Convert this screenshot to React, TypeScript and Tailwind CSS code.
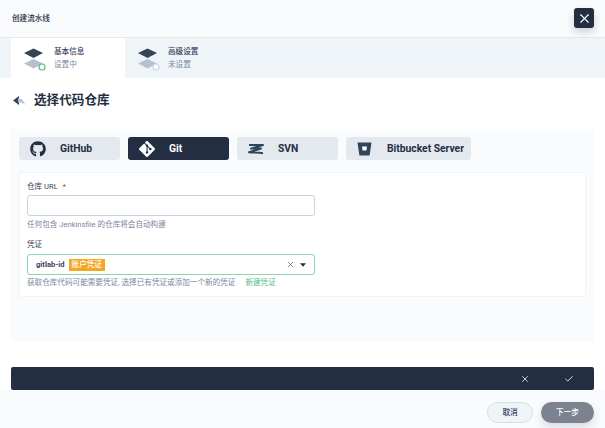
import { Check, X } from 'lucide-react';
import { FaGithub } from 'react-icons/fa';
import { SiGit } from 'react-icons/si';

const FONT = "font-['Roboto','Noto_Sans_CJK_SC',sans-serif]";

function StackIcon({ done }: { done: boolean }) {
  return (
    <svg width="24" height="24" viewBox="0 0 24 24" className="shrink-0 mt-[2px]">
      <path d="M1 16.5 L10.5 12 L20 16.5 L10.5 21.5 Z" fill="#b6c1cd" />
      <path d="M1 6 L10.5 1.5 L20 6 L10.5 11 Z" fill="#324558" />
      <circle
        cx="19"
        cy="20"
        r="3"
        fill="#fff"
        stroke={done ? '#55bc8a' : '#d1d7e0'}
        strokeWidth="1.2"
      />
    </svg>
  );
}

function SvnIcon() {
  return (
    <svg width="16" height="12" viewBox="0 0 16 12">
      <path
        d="M1 2 H15 L3 5.6 H13 L1 9.2 C6 9.6 11 9.6 15 10.2"
        fill="none"
        stroke="#324558"
        strokeWidth="2"
        strokeLinejoin="round"
      />
    </svg>
  );
}

function BitbucketIcon() {
  return (
    <svg width="15" height="14" viewBox="0 0 15 14">
      <path d="M0.5 0.5 H14.5 L12.6 13.5 H2.4 Z" fill="#324558" />
      <path d="M5 4.5 H10 L9.4 8.6 H5.6 Z" fill="#fff" />
    </svg>
  );
}

function RepoTab({ label, active, icon, width }: { label: string; active?: boolean; icon: React.ReactNode; width: string }) {
  return (
    <div
      className={`${width} h-[23px] rounded-[3px] flex items-center text-[10.3px] font-bold whitespace-nowrap ${
        active ? 'bg-[#242e42] text-white' : 'bg-[#e3e9ef] text-[#242e42]'
      }`}
    >
      <span className="w-[37px] mr-[4px] flex justify-center items-center shrink-0">{icon}</span>
      <span>{label}</span>
    </div>
  );
}

export default function App() {
  return (
    <div className={`${FONT} w-[605px] h-[428px] bg-white flex flex-col overflow-hidden text-[#242e42]`}>
      {/* header */}
      <div className="h-[38px] shrink-0 bg-[#f9fbfd] border-b border-[#e3e9ef] flex items-center justify-between pl-[12px] pr-[11px]">
        <span className="text-[7.6px] font-medium text-[#242e42]">创建流水线</span>
        <div className="w-5 h-5 mt-[-1px] rounded-[3px] bg-[#242e42] flex items-center justify-center shadow-[0_4px_8px_rgba(36,46,66,0.2)]">
          <X size={15} color="#fff" strokeWidth={1.8} />
        </div>
      </div>

      {/* steps */}
      <div className="h-[40px] shrink-0 bg-[#eff4f9] pl-[11px] flex">
        <div className="w-[114px] bg-white flex items-center pl-[12px] gap-[7px]">
          <StackIcon done />
          <div className="flex flex-col pt-[1px]">
            <span className="text-[7.6px] leading-[12.5px] font-medium text-[#36435c]">基本信息</span>
            <span className="text-[7.6px] leading-[12.5px] text-[#79879c]">设置中</span>
          </div>
        </div>
        <div className="w-[114px] flex items-center pl-[12px] gap-[7px]">
          <StackIcon done={false} />
          <div className="flex flex-col pt-[1px]">
            <span className="text-[7.6px] leading-[12.5px] font-medium text-[#36435c]">高级设置</span>
            <span className="text-[7.6px] leading-[12.5px] text-[#79879c]">未设置</span>
          </div>
        </div>
      </div>

      {/* title */}
      <div className="h-[51px] shrink-0 pl-[13px] pb-[6px] flex items-center gap-[9px]">
        <svg width="12" height="10" viewBox="0 0 12 10">
          <path d="M0 4.5 L6 0 L6 9 Z" fill="#324558" />
          <path d="M5 2.5 C8.5 2.5 11 4.5 12 9 C10 6.5 8 6 5 6.2 Z" fill="#b6c1cd" />
        </svg>
        <span className="text-[12.6px] font-bold text-[#242e42]">选择代码仓库</span>
      </div>

      {/* panel */}
      <div className="mx-[11px] h-[213px] shrink-0 bg-[#f9fbfd] px-2 pt-2">
        <div className="flex gap-2">
          <RepoTab label="GitHub" width="w-[101px]" icon={<FaGithub size={16} color="#242e42" />} />
          <RepoTab label="Git" width="w-[101px]" active icon={<SiGit size={16} color="#fff" />} />
          <RepoTab label="SVN" width="w-[101px]" icon={<SvnIcon />} />
          <RepoTab label="Bitbucket Server" width="w-[125px]" icon={<BitbucketIcon />} />
        </div>

        <div className="mt-[12px] h-[125px] bg-white border border-[#eff4f9] rounded-[2px] px-[7px] pt-[9px]">
          <div className="text-[7.6px] leading-[10px] text-[#36435c]">
            仓库 URL <span className="text-[#ca2621] ml-[3px]">*</span>
          </div>
          <div className="mt-[3px] w-[288px] h-[21px] rounded-[3px] border border-[#ccd3db] bg-white" />
          <div className="mt-[4px] text-[7.6px] leading-[10px] text-[#79879c]">任何包含 Jenkinsfile 的仓库将会自动构建</div>

          <div className="mt-[10px] text-[7.6px] leading-[10px] text-[#36435c]">凭证</div>
          <div className="mt-[4px] w-[288px] h-[21px] rounded-[3px] border border-[#8fd3b0] bg-white flex items-center pl-[8px] pr-[8px]">
            <span className="text-[7.6px] font-bold text-[#36435c]">gitlab-id</span>
            <span className="ml-[4px] h-[12px] px-[3px] bg-[#f5a623] text-white text-[7.6px] leading-[12px] font-medium">账户凭证</span>
            <X size={9} color="#36435c" strokeWidth={1.6} className="ml-auto mr-[5px]" />
            <svg width="6" height="4" viewBox="0 0 7 4">
              <path d="M0 0 H7 L3.5 4 Z" fill="#242e42" />
            </svg>
          </div>
          <div className="mt-[3px] text-[7.6px] leading-[10px] text-[#79879c] flex">
            <span>获取仓库代码可能需要凭证, 选择已有凭证或添加一个新的凭证</span>
            <span className="ml-[10px] text-[#55bc8a]">新建凭证</span>
          </div>
        </div>
      </div>

      {/* notification bar */}
      <div className="mt-[25px] mx-[11px] h-[23px] shrink-0 bg-[#242e42] rounded-[2px] flex items-center justify-end pr-[20px] gap-[34px]">
        <X size={10} color="#fff" strokeWidth={1.8} />
        <Check size={10} color="#fff" strokeWidth={2} />
      </div>

      {/* footer */}
      <div className="flex-1 bg-[#f9fbfd] flex items-start justify-end pr-[11px] pt-[12px] gap-2">
        <div className="w-[46px] h-[21px] rounded-full border border-[#d8dee5] bg-[#eff4f9] text-[7.6px] text-[#36435c] font-medium flex items-center justify-center">
          取消
        </div>
        <div className="w-[53px] h-[21px] rounded-full bg-[#7c8290] text-[7.6px] text-white font-medium flex items-center justify-center shadow-[0_4px_8px_rgba(36,46,66,0.15)]">
          下一步
        </div>
      </div>
    </div>
  );
}
